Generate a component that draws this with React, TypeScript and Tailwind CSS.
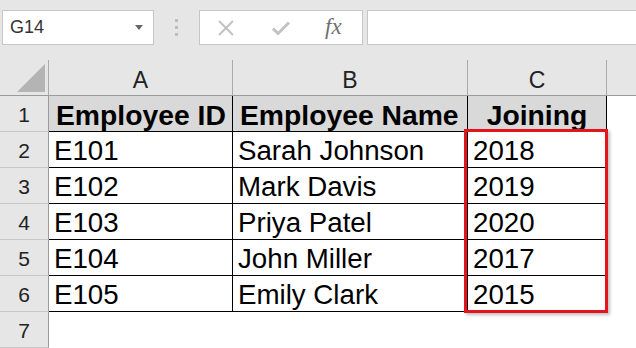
import React from "react";

const rows = [
  ["E101", "Sarah Johnson", "2018"],
  ["E102", "Mark Davis", "2019"],
  ["E103", "Priya Patel", "2020"],
  ["E104", "John Miller", "2017"],
  ["E105", "Emily Clark", "2015"],
];

function RowHead({ n }: { n: number }) {
  return (
    <div className="h-[36px] bg-[#e6e6e6] border-r border-r-[#9b9b9b] border-b border-b-[#c8c8c8] flex items-center justify-center text-[21px] text-[#222] pt-[2px]">
      {n}
    </div>
  );
}

function Cell({ children, bold, fill, center }: { children?: React.ReactNode; bold?: boolean; fill?: boolean; center?: boolean }) {
  return (
    <div
      className={
        "h-[36px] border-r border-b border-black flex items-center pt-[3px] text-black whitespace-nowrap overflow-hidden " +
        (bold ? "font-bold text-[28.3px] " : "text-[27.7px] ") +
        (fill ? "bg-[#d9d9d9] " : "bg-white ") +
        (center ? "justify-center" : bold ? "pl-[7px]" : "pl-[5px]")
      }
    >
      {children}
    </div>
  );
}

export default function App() {
  return (
    <div className="w-[636px] h-[348px] overflow-hidden bg-white" style={{ fontFamily: '"Liberation Sans", Arial, sans-serif' }}>
      {/* formula bar */}
      <div className="h-[60px] bg-[#e6e6e6] flex items-start pt-[10px]">
        <div className="ml-[2px] w-[152px] h-[35px] bg-white border border-[#c6c6c6] flex items-center justify-between pl-[7px] pr-[10px]">
          <span className="text-[18px] text-[#333]">G14</span>
          <svg width="8" height="5" viewBox="0 0 8 5">
            <path d="M0 0h8L4 5z" fill="#666" />
          </svg>
        </div>
        <div className="w-[45px] h-[35px] flex flex-col items-center justify-center gap-[4px]">
          <span className="w-[3px] h-[3px] bg-[#bdbdbd]" />
          <span className="w-[3px] h-[3px] bg-[#bdbdbd]" />
          <span className="w-[3px] h-[3px] bg-[#bdbdbd]" />
        </div>
        <div className="w-[164px] h-[35px] bg-white border border-[#c6c6c6] flex items-center">
          <svg width="20" height="18" viewBox="0 0 20 18" className="ml-[16px]">
            <path d="M3 2l14 14M17 2L3 16" stroke="#c2c2c2" strokeWidth="2" fill="none" />
          </svg>
          <svg width="20" height="18" viewBox="0 0 20 18" className="ml-[35px]">
            <path d="M2 9.5l5 5L18 3.5" stroke="#c2c2c2" strokeWidth="3" fill="none" />
          </svg>
          <span className="ml-[34px] text-[23px] italic text-[#707070]" style={{ fontFamily: '"Liberation Serif", "Times New Roman", serif' }}>
            fx
          </span>
        </div>
        <div className="ml-[4px] flex-1 h-[35px] bg-white border border-[#c6c6c6] border-r-0" />
      </div>

      {/* sheet */}
      <div className="relative grid grid-cols-[49px_184px_235px_139px_1fr]">
        <div className="h-[36px] bg-[#e6e6e6] border-r border-r-[#ababab] border-b border-b-[#9b9b9b] flex items-end justify-end pr-[2px] pb-[2px]">
          <svg width="30" height="30" viewBox="0 0 30 30">
            <path d="M29 1V29H1z" fill="#b4b4b4" />
          </svg>
        </div>
        {["A", "B", "C"].map((c) => (
          <div key={c} className="h-[36px] bg-[#e6e6e6] border-r border-r-[#ababab] border-b border-b-[#9b9b9b] flex items-center justify-center pt-[6px] text-[23px] text-[#222]">
            {c}
          </div>
        ))}
        <div className="h-[36px] bg-[#e6e6e6] border-b border-b-[#9b9b9b]" />

        <RowHead n={1} />
        <Cell bold fill>Employee ID</Cell>
        <Cell bold fill>Employee Name</Cell>
        <Cell bold fill center>Joining</Cell>
        <div />

        {rows.map((r, i) => (
          <React.Fragment key={r[0]}>
            <RowHead n={i + 2} />
            <Cell>{r[0]}</Cell>
            <Cell>{r[1]}</Cell>
            <Cell>{r[2]}</Cell>
            <div />
          </React.Fragment>
        ))}

        <RowHead n={7} />
        <div />
        <div />
        <div />
        <div />

        <div className="absolute left-[464px] top-[69px] w-[144px] h-[184px] border-[3px] border-[#e3141c] shadow-[2px_2px_3px_rgba(0,0,0,0.25)]" />
      </div>
    </div>
  );
}
